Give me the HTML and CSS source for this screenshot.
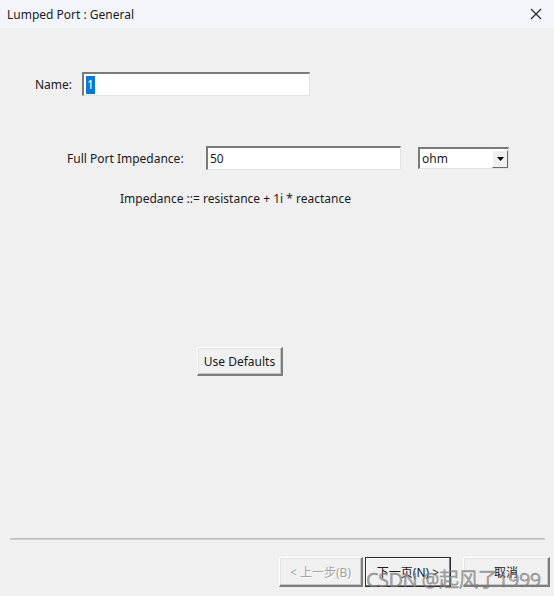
FILE: index.html
```html
<!DOCTYPE html>
<html lang="en">
<head>
  <meta charset="UTF-8">
  <title>Lumped Port : General</title>
  <link rel="stylesheet" href="styles.css">
</head>
<body>
  <div class="dialog">
    <div class="titlebar">
      <span class="title">Lumped Port : General</span>
      <svg class="close" width="12" height="12" viewBox="0 0 12 12">
        <path d="M1 1 L11 11 M11 1 L1 11" stroke="#222" stroke-width="1.1" fill="none"/>
      </svg>
    </div>

    <div class="page">
      <div class="row name-row">
        <label class="lbl">Name:</label>
        <div class="field name-field"><span class="sel">1</span></div>
      </div>

      <div class="row imp-row">
        <label class="lbl">Full Port Impedance:</label>
        <div class="field imp-field">50</div>
        <div class="combo">
          <span class="combo-text">ohm</span>
          <span class="combo-btn">
            <svg width="7" height="4" viewBox="0 0 7 4"><path d="M0 0 H7 L3.5 4 Z" fill="#000"/></svg>
          </span>
        </div>
      </div>

      <p class="formula">Impedance ::= resistance + 1i * reactance</p>

      <button class="btn defaults-btn">Use Defaults</button>
    </div>

    <div class="footer">
      <hr class="sep">
      <div class="buttons">
        <button class="btn nav-btn disabled">&lt; 上一步(B)</button>
        <button class="btn nav-btn default">下一页(N) &gt;</button>
        <button class="btn nav-btn cancel">取消</button>
      </div>
      <span class="watermark">CSDN @起风了1999</span>
    </div>
  </div>
</body>
</html>
```

FILE: styles.css
```css
* { margin: 0; padding: 0; box-sizing: border-box; }
body {
  font-family: "Noto Sans", "Noto Sans CJK SC", sans-serif;
  font-size: 12px;
  color: #1a1a1a;
  background: #f0f0f0;
}
.dialog {
  width: 554px;
  height: 596px;
  display: flex;
  flex-direction: column;
  background: #f0f0f0;
}
.titlebar {
  height: 28px;
  background: #f2f5fa;
  display: flex;
  align-items: center;
  justify-content: space-between;
  padding: 0 12px 0 7px;
}
.title { font-size: 12px; color: #1a1a1a; }

.page {
  flex: 1;
  padding-top: 44px;
}
.row {
  display: flex;
  align-items: center;
}
.name-row { padding-left: 35px; }
.name-row .lbl { width: 47px; }
.field {
  height: 24px;
  background: #fff;
  border-top: 2px solid #7a7a7a;
  border-left: 2px solid #7a7a7a;
  border-right: 1px solid #e3e3e3;
  border-bottom: 1px solid #e3e3e3;
  padding-left: 2px;
  display: flex;
  align-items: center;
}
.name-field { width: 228px; }
.sel {
  background: #0a78d7;
  color: #fff;
  padding: 1px 1px;
  line-height: 16px;
}

.imp-row {
  margin-top: 50px;
  padding-left: 67px;
}
.imp-row .lbl { width: 139px; }
.imp-field { width: 195px; }
.combo {
  margin-left: 17px;
  width: 91px;
  height: 22px;
  background: #fff;
  border-top: 2px solid #7a7a7a;
  border-left: 2px solid #7a7a7a;
  border-right: 1px solid #e3e3e3;
  border-bottom: 1px solid #e3e3e3;
  display: flex;
  align-items: center;
  justify-content: space-between;
  padding-left: 2px;
}
.combo-btn {
  width: 16px;
  height: 18px;
  background: #f0f0f0;
  border-top: 1px solid #fff;
  border-left: 1px solid #fff;
  border-right: 1px solid #6a6a6a;
  border-bottom: 1px solid #6a6a6a;
  display: flex;
  align-items: center;
  justify-content: center;
}

.formula {
  margin-top: 21px;
  padding-left: 120px;
  line-height: 16px;
}

.btn {
  font-family: inherit;
  font-size: 12px;
  color: #1a1a1a;
  background: #f0f0f0;
  border-top: 1px solid #fff;
  border-left: 1px solid #fff;
  border-right: 2px solid #7d7d7d;
  border-bottom: 2px solid #7d7d7d;
  box-shadow: inset -1px -1px 0 #c8c8c8, inset 1px 1px 0 #e3e3e3;
}
.defaults-btn {
  display: block;
  margin: 140px 0 0 197px;
  width: 86px;
  height: 29px;
}

.footer {
  position: relative;
  height: 58px;
}
.sep {
  margin: 0 9px 0 10px;
  border: none;
  border-top: 1px solid #bdbdbd;
  border-bottom: 1px solid #cfcfcf;
}
.buttons {
  display: flex;
  padding: 17px 0 0 279px;
  gap: 2px;
}
.nav-btn {
  width: 84px;
  height: 30px;
}
.nav-btn.disabled { color: #a3a3a3; text-shadow: 1px 1px 0 #fff; }
.nav-btn.default {
  width: 86px;
  border: 1px solid #2b2b2b;
  box-shadow: inset -1px -1px 0 #7d7d7d, inset 1px 1px 0 #fff;
}
.nav-btn.cancel { margin-left: 10px; width: 87px; }

.watermark {
  position: absolute;
  left: 366px;
  top: 26px;
  font-size: 20px;
  color: rgba(140, 140, 140, 0.75);
  -webkit-text-stroke: 0.4px rgba(90, 90, 90, 0.6);
  letter-spacing: -0.6px;
  white-space: nowrap;
}
```
